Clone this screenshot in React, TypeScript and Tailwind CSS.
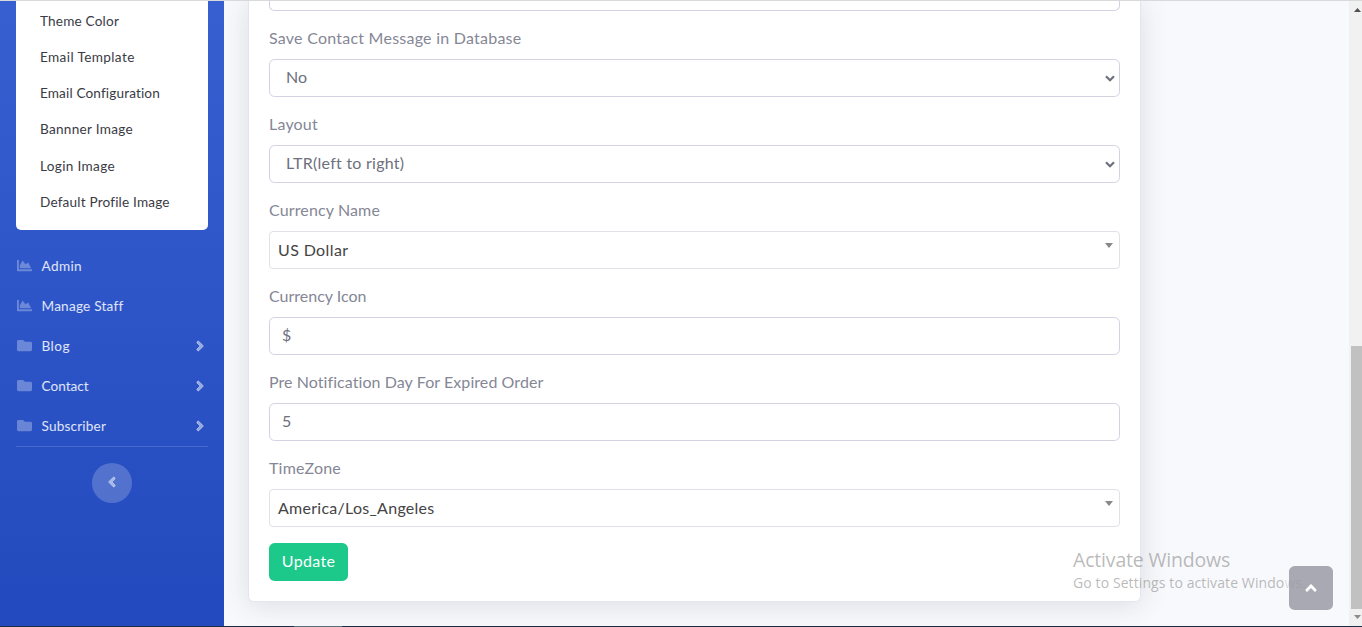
import type { ReactNode } from "react";
import { FaAngleLeft, FaAngleRight, FaAngleUp, FaChartArea, FaFolder } from "react-icons/fa";

const settingsLinks = [
  { label: "Theme Color", tracking: "tracking-[0.18px]" },
  { label: "Email Template", tracking: "tracking-[0.38px]" },
  { label: "Email Configuration", tracking: "tracking-[0.14px]" },
  { label: "Bannner Image", tracking: "tracking-[0.28px]" },
  { label: "Login Image", tracking: "tracking-[0.33px]" },
  { label: "Default Profile Image", tracking: "tracking-[0.18px]" },
];

const navLinks = [
  { label: "Admin", Icon: FaChartArea, expandable: false, tracking: "tracking-[0.36px]" },
  { label: "Manage Staff", Icon: FaChartArea, expandable: false, tracking: "tracking-[0.22px]" },
  { label: "Blog", Icon: FaFolder, expandable: true, tracking: "tracking-[0.45px]" },
  { label: "Contact", Icon: FaFolder, expandable: true, tracking: "tracking-normal" },
  { label: "Subscriber", Icon: FaFolder, expandable: true, tracking: "tracking-[0.18px]" },
];

function Sidebar() {
  return (
    <aside className="flex w-56 shrink-0 flex-col bg-linear-to-b from-[#385fd0] to-[#224abe] px-4">
      <div className="h-[229px] shrink-0 rounded-b-[5px] bg-white px-6 pt-[2px]">
        {settingsLinks.map(({ label, tracking }) => (
          <a key={label} className={`flex h-[36.2px] items-center text-[13.6px] whitespace-nowrap text-[#3a3b45] ${tracking}`}>
            {label}
          </a>
        ))}
      </div>
      <nav className="mt-4 border-b border-white/15">
        {navLinks.map(({ label, Icon, expandable, tracking }) => (
          <a key={label} className="flex h-10 items-center pr-1 pl-px">
            <Icon className="mb-px size-[15px] shrink-0 text-white/30" />
            <span className={`ml-[9.5px] flex-1 text-[13.6px] text-white/85 ${tracking}`}>{label}</span>
            {expandable && (
              <FaAngleRight className="size-4 translate-x-1 overflow-visible stroke-current stroke-[24] text-white/50" />
            )}
          </a>
        ))}
      </nav>
      <button className="mt-4 flex size-10 items-center justify-center self-center rounded-full bg-white/20 pb-0.5 text-white/50">
        <FaAngleLeft className="size-4 overflow-visible stroke-current stroke-[24]" />
      </button>
    </aside>
  );
}

function Field({ label, tracking, children }: { label: string; tracking: string; children: ReactNode }) {
  return (
    <div className="mb-4">
      <label className={`mb-[9px] block h-[23px] leading-[22px] text-[#858796] ${tracking}`}>{label}</label>
      {children}
    </div>
  );
}

function SelectBox({ value, tracking }: { value: string; tracking: string }) {
  return (
    <div className="flex h-[38px] items-center justify-between rounded-[5.6px] border border-[#d1d3e2] bg-white pr-1 pl-4 text-[#6e707e]">
      <span className={`mb-0.5 ${tracking}`}>{value}</span>
      <svg className="h-[7px] w-2.5" viewBox="0 0 10 7" fill="none" stroke="#6e707e" strokeWidth="2.2">
        <path d="M1 1.2 5 5.2 9 1.2" />
      </svg>
    </div>
  );
}

function SearchSelect({ value, tracking }: { value: string; tracking: string }) {
  return (
    <div className="flex h-[38px] items-center justify-between rounded border border-[#e0e2e7] bg-white pr-1.5 pl-2 text-[#444]">
      <span className={tracking}>{value}</span>
      <svg className="mb-[9px] h-[5px] w-2" viewBox="0 0 8 5">
        <path d="M0 0H8L4 5Z" fill="#888" />
      </svg>
    </div>
  );
}

function TextInput({ value }: { value: string }) {
  return (
    <div className="flex h-[38px] items-center rounded-[5.6px] border border-[#d1d3e2] bg-white px-3 pb-0.5 text-[#6e707e]">
      {value}
    </div>
  );
}

function Scrollbar() {
  return (
    <div className="flex w-[13px] shrink-0 flex-col bg-[#f1f1f1] pl-0.5">
      <svg className="mt-[7px] ml-[3px] h-1 w-[7px]" viewBox="0 0 7 4">
        <path d="M0 4 3.5 0 7 4Z" fill="#505050" />
      </svg>
      <div className="mt-[334px] h-[263px] bg-[#c1c1c1]" />
      <svg className="mt-1.5 ml-[3px] h-1 w-[7px]" viewBox="0 0 7 4">
        <path d="M0 0H7L3.5 4Z" fill="#8b8b8b" />
      </svg>
    </div>
  );
}

export default function App() {
  return (
    <div className="relative flex h-[627px] w-[1362px] flex-col overflow-hidden font-['Lato',sans-serif] text-base">
      <div className="h-px shrink-0 bg-[#d8d9dc]" />
      <div className="flex h-[625px] overflow-hidden">
        <Sidebar />
        <main className="flex-1 overflow-hidden bg-[#f8f9fc] pl-6">
          <section className="h-[601px] w-[893px] rounded-b-[5.6px] border border-t-0 border-[#e3e6f0] bg-white px-5 shadow-[0_2.4px_28px_0_rgba(58,59,69,0.15)]">
            <div className="mb-4 h-2.5 rounded-b-[5.6px] border border-t-0 border-[#d1d3e2]" />
            <Field label="Save Contact Message in Database" tracking="tracking-[0.24px]">
              <SelectBox value="No" tracking="tracking-normal" />
            </Field>
            <Field label="Layout" tracking="tracking-[0.2px]">
              <SelectBox value="LTR(left to right)" tracking="tracking-[0.26px]" />
            </Field>
            <Field label="Currency Name" tracking="tracking-[0.13px]">
              <SearchSelect value="US Dollar" tracking="tracking-[0.38px]" />
            </Field>
            <Field label="Currency Icon" tracking="tracking-normal">
              <TextInput value="$" />
            </Field>
            <Field label="Pre Notification Day For Expired Order" tracking="tracking-[0.07px]">
              <TextInput value="5" />
            </Field>
            <Field label="TimeZone" tracking="tracking-[0.2px]">
              <SearchSelect value="America/Los_Angeles" tracking="tracking-[0.27px]" />
            </Field>
            <button className="flex h-[38px] w-[79px] items-center justify-center rounded-[5.6px] bg-[#1cc88a] pb-0.5 tracking-[0.33px] text-white">
              Update
            </button>
          </section>
        </main>
        <Scrollbar />
      </div>
      <div className="flex h-px shrink-0 bg-[#1d2d47] pl-[294px]">
        <div className="w-12 bg-[#56717a]" />
      </div>
      <button className="absolute top-[566px] left-[1289px] flex size-11 items-center justify-center rounded-[5.6px] bg-[#a9a9b3] text-white">
        <FaAngleUp className="size-[18px]" />
      </button>
      <div className="absolute top-[547px] left-[1073px] font-['Open_Sans',sans-serif] whitespace-nowrap text-[#8c8c8c]/60">
        <p className="text-[19.5px] leading-[26px] tracking-[-0.18px]">Activate Windows</p>
        <p className="text-sm leading-5 tracking-[0.1px]">
          Go to Settings to activate Windo<span className="opacity-40">ws.</span>
        </p>
      </div>
    </div>
  );
}
